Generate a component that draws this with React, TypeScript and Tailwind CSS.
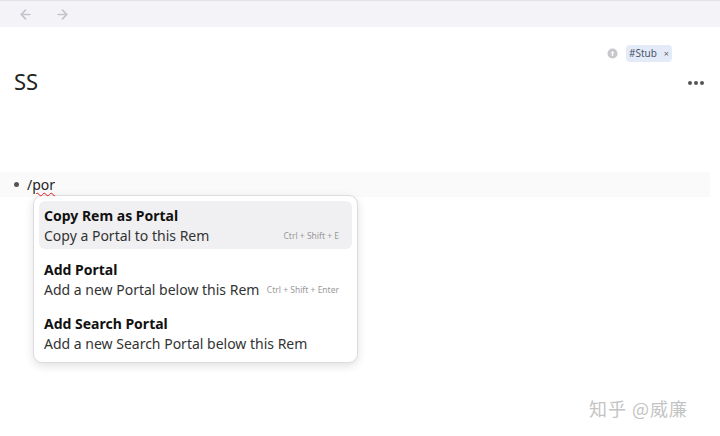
import React from 'react';

const items = [
  { title: 'Copy Rem as Portal', desc: 'Copy a Portal to this Rem', keys: 'Ctrl + Shift + E', active: true },
  { title: 'Add Portal', desc: 'Add a new Portal below this Rem', keys: 'Ctrl + Shift + Enter', active: false },
  { title: 'Add Search Portal', desc: 'Add a new Search Portal below this Rem', keys: '', active: false },
];

const App: React.FC = () => {
  return (
    <div className="w-[720px] h-[436px] bg-white relative overflow-hidden" style={{ fontFamily: '"Noto Sans", "Open Sans", sans-serif' }}>
      <div className="h-[27px] bg-[#f4f4f8] border-t border-[#e2e2e8] flex items-center pl-[18px] gap-[22px] text-[#c4c4cc]">
        <svg width="15" height="15" viewBox="0 0 24 24" fill="none" stroke="currentColor" strokeWidth="2.6" strokeLinecap="round" strokeLinejoin="round">
          <path d="M19 12H5M12 19l-7-7 7-7" />
        </svg>
        <svg width="15" height="15" viewBox="0 0 24 24" fill="none" stroke="currentColor" strokeWidth="2.6" strokeLinecap="round" strokeLinejoin="round">
          <path d="M5 12h14M12 5l7 7-7 7" />
        </svg>
      </div>

      <div className="flex justify-end items-center pr-[48px] pt-[18px] gap-[8px]">
        <svg width="11" height="11" viewBox="0 0 12 12">
          <circle cx="6" cy="6" r="5.5" fill="#c8c8cc" />
          <path d="M6 3.2L3.8 5.6h1.5V8.8h1.4V5.6h1.5z" fill="#fff" />
        </svg>
        <div className="h-[17px] bg-[#e4ebf8] rounded-[4px] px-[3px] flex items-center gap-[7px] text-[10px] text-[#4a5568]">
          <span>#Stub</span>
          <span className="text-[9px] text-[#666]">×</span>
        </div>
      </div>

      <div className="flex items-center justify-between pl-[14px] pr-[16px] mt-[5px]">
        <div className="text-[22px] text-[#222] leading-[28px]">SS</div>
        <div className="flex gap-[2px] mt-[4px]">
          <span className="w-[4px] h-[4px] rounded-full bg-[#555]" />
          <span className="w-[4px] h-[4px] rounded-full bg-[#555]" />
          <span className="w-[4px] h-[4px] rounded-full bg-[#555]" />
        </div>
      </div>

      <div className="mt-[77px] mr-[10px] h-[25px] bg-[#fafafb] flex items-center pl-[14px]">
        <span className="w-[5px] h-[5px] rounded-full bg-[#555] mr-[8px]" />
        <span className="text-[14px] text-[#222]">
          /<span className="underline decoration-wavy decoration-[#d22] decoration-1 underline-offset-2">por</span>
        </span>
      </div>

      <div className="-mt-[2px] ml-[33px] w-[325px] bg-white border border-[#dcdce0] rounded-[9px] shadow-[0_3px_10px_rgba(0,0,0,0.12)] p-[5px] flex flex-col gap-[6px]">
        {items.map((it) => (
          <div key={it.title} className={`rounded-[6px] px-[5px] pt-[5px] pb-[3px] ${it.active ? 'bg-[#f0f0f2]' : ''}`}>
            <div className="text-[14px] font-bold text-[#111] leading-[20px]">{it.title}</div>
            <div className="flex items-center justify-between">
              <span className="text-[14px] text-[#333] leading-[20px]">{it.desc}</span>
              {it.keys && <span className="text-[8.5px] text-[#999] pr-[8px]">{it.keys}</span>}
            </div>
          </div>
        ))}
      </div>

      <div className="absolute left-[589px] top-[395px] text-[18px] text-[#c4c4c4] tracking-[1px]" style={{ fontFamily: '"Noto Sans CJK SC", sans-serif' }}>
        知乎 @威廉
      </div>
    </div>
  );
};

export default App;
